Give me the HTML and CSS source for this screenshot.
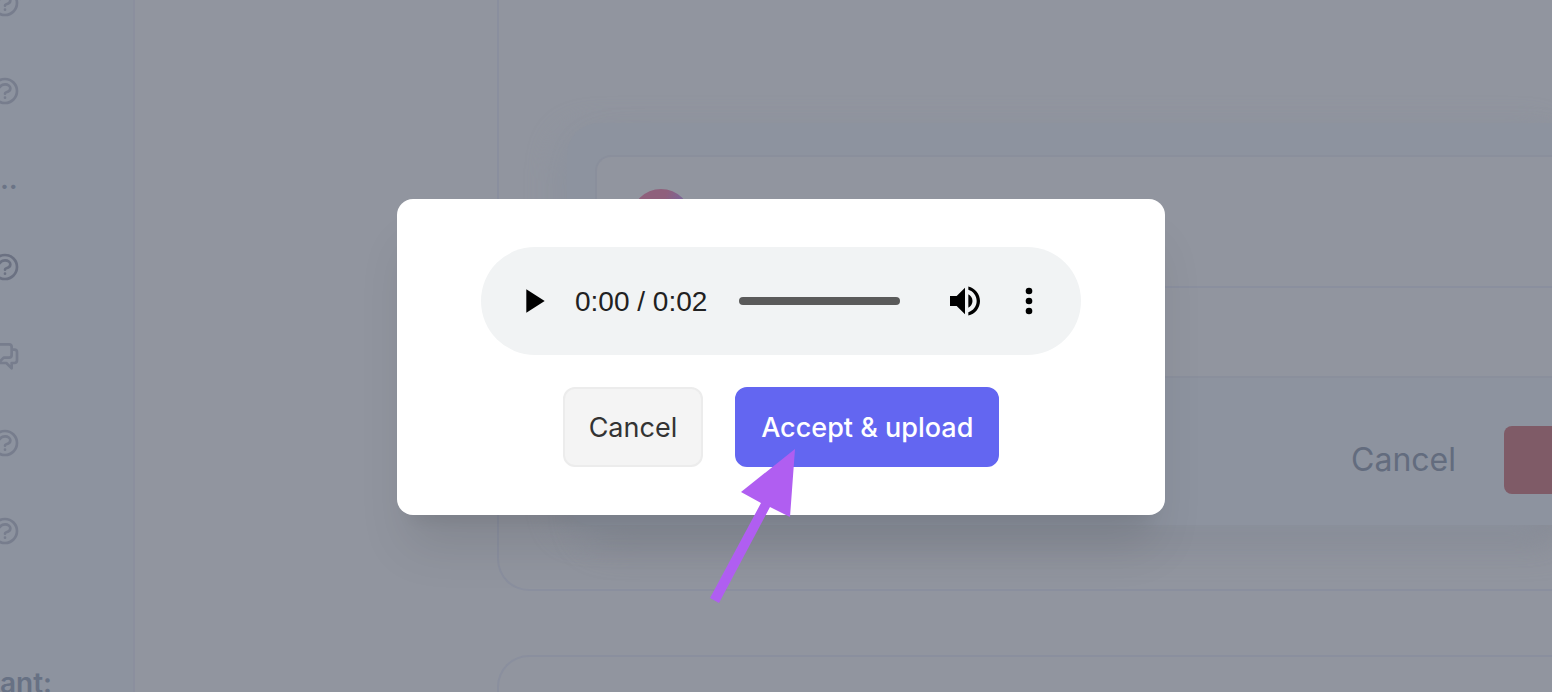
FILE: index.html
```html
<!DOCTYPE html>
<html lang="en">
<head>
<meta charset="utf-8">
<title>Upload recording</title>
<meta name="viewport" content="width=device-width, initial-scale=1">
<link rel="stylesheet" href="styles.css">
</head>
<body>
<svg class="sprite" aria-hidden="true">
  <symbol id="help" viewBox="0 0 24 24"><path d="M8.228 9c.549-1.165 2.03-2 3.772-2 2.21 0 4 1.343 4 3 0 1.4-1.278 2.575-3.006 2.907-.542.104-.994.54-.994 1.093m0 3h.01M21 12a9 9 0 11-18 0 9 9 0 0118 0z"/></symbol>
  <symbol id="chat" viewBox="0 0 24 24"><path d="M17 8h2a2 2 0 012 2v6a2 2 0 01-2 2h-2v4l-4-4H9a1.994 1.994 0 01-1.414-.586m0 0L11 14h4a2 2 0 002-2V6a2 2 0 00-2-2H5a2 2 0 00-2 2v6a2 2 0 002 2h2v4l.586-.586z"/></symbol>
</svg>
<div class="app">
  <aside class="sidebar">
    <nav class="nav">
      <div class="nav-item"><svg class="nav-icon"><use href="#help"/></svg></div>
      <div class="nav-item"><svg class="nav-icon"><use href="#help"/></svg></div>
      <div class="nav-item nav-more">...</div>
      <div class="nav-item"><svg class="nav-icon nav-icon-active"><use href="#help"/></svg></div>
      <div class="nav-item"><svg class="nav-icon"><use href="#chat"/></svg></div>
      <div class="nav-item"><svg class="nav-icon"><use href="#help"/></svg></div>
      <div class="nav-item"><svg class="nav-icon"><use href="#help"/></svg></div>
    </nav>
    <div class="nav-heading">ant:</div>
  </aside>
  <main class="main">
    <section class="card">
      <div class="panel">
        <div class="preview">
          <div class="preview-head"><span class="avatar"></span></div>
          <div class="preview-row"></div>
        </div>
        <div class="panel-foot">
          <button class="link-button" type="button">Cancel</button>
          <button class="danger-button" type="button" aria-label="Delete"></button>
        </div>
      </div>
    </section>
    <section class="card"></section>
  </main>
</div>
<div class="overlay">
  <div class="dialog" role="dialog" aria-label="Review recording">
    <div class="player">
      <button class="player-button" type="button" aria-label="Play"><svg viewBox="0 0 24 24"><path d="M8 5v14l11-7z"/></svg></button>
      <span class="player-time">0:00 / 0:02</span>
      <input class="player-track" type="range" min="0" max="2" value="0" aria-label="Position">
      <button class="player-button player-volume" type="button" aria-label="Mute"><svg viewBox="0 0 24 24"><path d="M3 9v6h4l5 5V4L7 9H3zm13.500 3c0-1.770-1.020-3.290-2.500-4.030v8.050c1.480-.730 2.500-2.250 2.500-4.020zM14 3.230v2.060c2.890.860 5 3.540 5 6.710s-2.110 5.850-5 6.710v2.060c4.010-.910 7-4.490 7-8.770s-2.990-7.860-7-8.770z"/></svg></button>
      <button class="player-button" type="button" aria-label="More options"><svg viewBox="0 0 24 24"><circle cx="12" cy="6" r="2"/><circle cx="12" cy="12" r="2"/><circle cx="12" cy="18" r="2"/></svg></button>
    </div>
    <div class="actions">
      <button class="button" type="button">Cancel</button>
      <button class="button button-primary" type="button">Accept &amp; upload</button>
    </div>
    <svg class="pointer" viewBox="0 0 86 156" aria-hidden="true"><path d="M86 0L32 43L52 54L1 149L10 154L61 58L81 68Z"/></svg>
  </div>
</div>
</body>
</html>
```
FILE: styles.css
```css
* { box-sizing: border-box; }
body {
  margin: 0;
  overflow: hidden;
  background: #91959f;
  font-family: Inter, sans-serif;
}
button { font: inherit; border: 0; margin: 0; cursor: pointer; }
.sprite { display: none; }
.app { display: flex; height: 100vh; overflow: hidden; }

.sidebar {
  flex: 0 0 135px;
  overflow: hidden;
  background: #8d939f;
  border-right: 2px solid #8b8f9e;
}
.nav { margin: -41px 0 0 -11px; }
.nav-item { display: flex; align-items: center; height: 88px; }
.nav-icon {
  width: 32px;
  height: 32px;
  fill: none;
  stroke: #777d8d;
  stroke-width: 2;
  stroke-linecap: round;
  stroke-linejoin: round;
}
.nav-icon-active { stroke: #6b7182; }
.nav-more { padding-left: 2px; color: #6b7486; font-size: 28px; font-weight: 600; }
.nav-heading {
  margin-top: 92px;
  color: #677184;
  font-size: 28px;
  font-weight: 600;
  line-height: 32px;
}

.main {
  flex: 1;
  display: flex;
  flex-direction: column;
  gap: 64px;
  margin-left: 362px;
}
.card {
  flex: 0 0 auto;
  min-height: 160px;
  border: 2px solid #8a8f9e;
  border-right: 0;
  border-radius: 32px 0 0 32px;
}
.card:first-child {
  padding: 123px 0 64px 68px;
  border-top: 0;
  border-radius: 0 0 0 32px;
}
.panel {
  padding-top: 32px;
  background: #8d939f;
  border-radius: 32px 0 0 24px;
  box-shadow: -8px 8px 32px #8d939f, 16px 20px 40px -8px #80848e;
}
.preview {
  margin-left: 28px;
  background: #91959f;
  border: 2px solid #8a8f9c;
  border-width: 2px 0 2px 2px;
  border-radius: 16px 0 0 0;
}
.preview-head {
  height: 131px;
  padding: 32px 36px;
  border-bottom: 2px solid #8a8f9e;
}
.avatar {
  display: block;
  width: 60px;
  height: 60px;
  margin-left: -2px;
  border-radius: 50%;
  background: linear-gradient(110deg, #8f607c 45%, #7666a0 75%);
}
.preview-row { height: 88px; }
.panel-foot {
  display: flex;
  align-items: center;
  justify-content: flex-end;
  gap: 48px;
  height: 147px;
  padding-top: 16px;
}
.link-button { padding: 0; background: none; color: #636c7e; font-size: 32px; line-height: 40px; }
.danger-button { width: 48px; height: 68px; background: #7f5b67; border-radius: 8px 0 0 8px; }

.overlay {
  position: fixed;
  inset: 0;
  display: flex;
  align-items: center;
  justify-content: center;
  padding: 22px 0 0 10px;
}
.dialog {
  position: relative;
  display: flex;
  flex-direction: column;
  align-items: center;
  gap: 32px;
  width: 768px;
  max-width: 100%;
  padding: 48px;
  background: #fff;
  border-radius: 16px;
  box-shadow: 0 40px 50px -10px rgb(0 0 0 / 10%), 0 16px 20px -12px rgb(0 0 0 / 8%);
}
.player {
  display: flex;
  align-items: center;
  width: 600px;
  max-width: 100%;
  height: 108px;
  padding: 0 32px;
  background: #f1f3f4;
  border-radius: 54px;
}
.player-button { flex: none; width: 40px; height: 40px; padding: 0; background: none; }
.player-button svg { display: block; width: 40px; height: 40px; fill: #000; }
.player-time {
  margin: 0 32px 0 22px;
  padding-top: 2px;
  color: #212121;
  font-family: "Liberation Sans", sans-serif;
  font-size: 28px;
  white-space: nowrap;
}
.player-track {
  flex: 1;
  min-width: 0;
  height: 8px;
  margin: 0;
  appearance: none;
  background: #5a5a5a;
  border-radius: 4px;
}
.player-track::-webkit-slider-thumb { appearance: none; width: 0; height: 0; }
.player-volume { margin: 0 24px 0 45px; }

.actions { display: flex; gap: 32px; }
.button {
  height: 80px;
  padding: 0 24px;
  border: 2px solid #ececec;
  border-radius: 12px;
  background: #f4f4f4;
  color: #333;
  font-size: 27px;
}
.button-primary { background: #6366f1; border-color: #6366f1; color: #fff; font-weight: 500; }
.pointer {
  position: absolute;
  left: 312px;
  top: 250px;
  width: 86px;
  height: 156px;
  fill: #b05ef1;
  pointer-events: none;
}
```
